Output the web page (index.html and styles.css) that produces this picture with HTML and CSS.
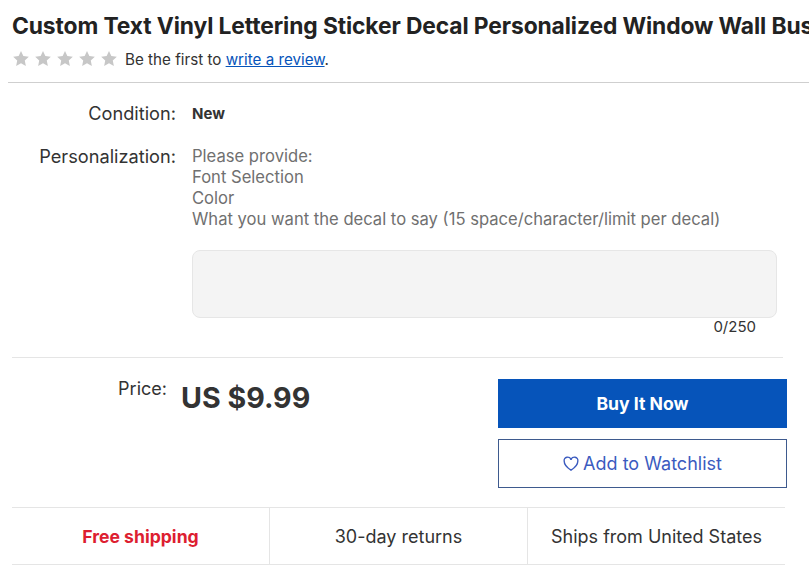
FILE: index.html
```html
<!DOCTYPE html>
<html>
<head>
<meta charset="utf-8">
<link rel="stylesheet" href="styles.css">
</head>
<body>
<div class="page">
  <h1 class="title">Custom Text Vinyl Lettering Sticker Decal Personalized Window Wall Business Sign</h1>
  <div class="rating">
    <span class="stars">
      <svg viewBox="0 0 20 20"><path d="M10 1.2l2.6 5.6 6.1.7-4.5 4.2 1.2 6.1L10 14.8l-5.4 3 1.2-6.1L1.3 7.5l6.1-.7z"/></svg>
      <svg viewBox="0 0 20 20"><path d="M10 1.2l2.6 5.6 6.1.7-4.5 4.2 1.2 6.1L10 14.8l-5.4 3 1.2-6.1L1.3 7.5l6.1-.7z"/></svg>
      <svg viewBox="0 0 20 20"><path d="M10 1.2l2.6 5.6 6.1.7-4.5 4.2 1.2 6.1L10 14.8l-5.4 3 1.2-6.1L1.3 7.5l6.1-.7z"/></svg>
      <svg viewBox="0 0 20 20"><path d="M10 1.2l2.6 5.6 6.1.7-4.5 4.2 1.2 6.1L10 14.8l-5.4 3 1.2-6.1L1.3 7.5l6.1-.7z"/></svg>
      <svg viewBox="0 0 20 20"><path d="M10 1.2l2.6 5.6 6.1.7-4.5 4.2 1.2 6.1L10 14.8l-5.4 3 1.2-6.1L1.3 7.5l6.1-.7z"/></svg>
    </span>
    <span class="rating-text">Be the first to <a href="#" class="link">write a review</a>.</span>
  </div>
  <div class="rule-full"></div>

  <div class="details">
    <div class="row">
      <div class="label">Condition:</div>
      <div class="value strong">New</div>
    </div>
    <div class="row row-pers">
      <div class="label">Personalization:</div>
      <div class="value">
        <div class="instructions">Please provide:<br>Font Selection<br>Color<br>What you want the decal to say (15 space/character/limit per decal)</div>
        <div class="textbox"></div>
        <div class="counter">0/250</div>
      </div>
    </div>
  </div>
  <div class="rule"></div>

  <div class="buy">
    <div class="price-block">
      <div class="price-label">Price:</div>
      <div class="price">US $9.99</div>
    </div>
    <div class="actions">
      <button class="btn btn-primary">Buy It Now</button>
      <button class="btn btn-secondary">
        <svg class="heart" viewBox="0 0 16 16"><path d="M8 14.2S1.2 9.9 1.2 5.3A3.4 3.4 0 0 1 8 3.9a3.4 3.4 0 0 1 6.8 1.4c0 4.6-6.8 8.9-6.8 8.9z"/></svg>
        <span>Add to Watchlist</span>
      </button>
    </div>
  </div>

  <div class="perks">
    <div class="perk perk-free">Free shipping</div>
    <div class="perk">30-day returns</div>
    <div class="perk">Ships from United States</div>
  </div>
</div>
</body>
</html>
```
FILE: styles.css
```css
html, body {
  margin: 0;
  padding: 0;
  background: #fff;
}
body {
  font-family: "Inter", "Open Sans", "Liberation Sans", sans-serif;
  color: #333;
  width: 809px;
  overflow: hidden;
}
.page {
  padding: 0 0 0 12px;
}
.title {
  margin: 0;
  padding-top: 12px;
  font-size: 22.8px;
  line-height: 28px;
  font-weight: 700;
  color: #222;
  white-space: nowrap;
  overflow: hidden;
  letter-spacing: -0.1px;
}
.rating {
  display: flex;
  align-items: center;
  height: 22px;
  margin-top: 8px;
}
.stars {
  display: flex;
  gap: 4px;
}
.stars svg {
  width: 18px;
  height: 18px;
  fill: #c7c7c7;
}
.rating-text {
  margin-left: 7px;
  font-size: 15.2px;
  color: #333;
}
.link {
  color: #0654ba;
  text-decoration: underline;
}
.rule-full {
  height: 1px;
  background: #cfcfcf;
  margin: 12px 0 0 -4px;
}
.details {
  padding-top: 20px;
}
.row {
  display: flex;
  line-height: 21px;
}
.row-pers {
  margin-top: 22px;
}
.label {
  width: 164px;
  text-align: right;
  color: #333;
  font-size: 18.2px;
  flex-shrink: 0;
}
.value {
  margin-left: 16px;
  width: 585px;
  font-size: 16.6px;
}
.strong {
  font-weight: 700;
  font-size: 15px;
  color: #333;
}
.instructions {
  color: #707070;
}
.textbox {
  margin-top: 20px;
  height: 66px;
  background: #f4f4f4;
  border: 1px solid #e6e6e6;
  border-radius: 8px;
}
.counter {
  text-align: right;
  padding-right: 21px;
  font-size: 15px;
  line-height: 18px;
  color: #333;
}
.rule {
  height: 1px;
  width: 771px;
  background: #e5e5e5;
  margin-top: 21px;
}
.buy {
  display: flex;
  padding-top: 21px;
}
.price-block {
  display: flex;
  align-items: flex-start;
  width: 486px;
}
.price-label {
  width: 155px;
  text-align: right;
  font-size: 18px;
  line-height: 20px;
  color: #333;
}
.price {
  margin-left: 14px;
  margin-top: 2px;
  font-size: 28.6px;
  line-height: 34px;
  font-weight: 700;
  color: #333;
}
.actions {
  display: flex;
  flex-direction: column;
  gap: 11px;
  width: 289px;
}
.btn {
  height: 49px;
  width: 289px;
  font-family: inherit;
  font-size: 18px;
  display: flex;
  align-items: center;
  justify-content: center;
  cursor: pointer;
}
.btn-primary {
  background: #0654ba;
  border: none;
  color: #fff;
  font-weight: 700;
  font-size: 17.6px;
}
.btn-secondary {
  background: #fff;
  border: 1px solid #3e5a8e;
  color: #3b5bbf;
  gap: 4px;
}
.heart {
  width: 16px;
  height: 16px;
  fill: none;
  stroke: #3b5bbf;
  stroke-width: 1.4;
}
.perks {
  display: flex;
  width: 773px;
  margin-top: 19px;
  border-top: 1px solid #e5e5e5;
  border-bottom: 1px solid #e5e5e5;
  height: 56px;
}
.perk {
  flex: 1;
  display: flex;
  align-items: center;
  justify-content: center;
  font-size: 18px;
  color: #333;
}
.perk + .perk {
  border-left: 1px solid #e5e5e5;
}
.perk-free {
  color: #dd1e31;
  font-weight: 700;
  font-size: 17.6px;
}
```
